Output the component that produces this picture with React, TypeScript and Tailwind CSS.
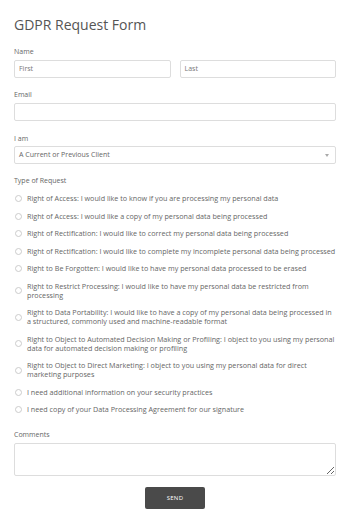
import React from 'react';

const OPTIONS: string[] = [
  'Right of Access: I would like to know if you are processing my personal data',
  'Right of Access: I would like a copy of my personal data being processed',
  'Right of Rectification: I would like to correct my personal data being processed',
  'Right of Rectification: I would like to complete my incomplete personal data being processed',
  'Right to Be Forgotten: I would like to have my personal data processed to be erased',
  'Right to Restrict Processing: I would like to have my personal data be restricted from processing',
  'Right to Data Portability: I would like to have a copy of my personal data being processed in a structured, commonly used and machine-readable format',
  'Right to Object to Automated Decision Making or Profiling: I object to you using my personal data for automated decision making or profiling',
  'Right to Object to Direct Marketing: I object to you using my personal data for direct marketing purposes',
  'I need additional information on your security practices',
  'I need copy of your Data Processing Agreement for our signature',
];

function Label({ children }: { children: React.ReactNode }) {
  return <div className="text-[7px] leading-[10px] text-[#666]">{children}</div>;
}

export default function App() {
  return (
    <div className="min-h-[523px] bg-white px-[14px] pt-[15px] text-[#555] antialiased" style={{ fontFamily: '"Open Sans", sans-serif' }}>
      <h1 className="text-[14px] leading-[19px] text-[#555]">GDPR Request Form</h1>

      <div className="mt-[13px]">
        <Label>Name</Label>
        <div className="mt-[3px] flex gap-[9px]">
          <div className="flex h-[18px] flex-1 items-center rounded-[2px] border border-[#ddd] px-[4px] text-[7px] text-[#777]">First</div>
          <div className="flex h-[18px] flex-1 items-center rounded-[2px] border border-[#ddd] px-[4px] text-[7px] text-[#777]">Last</div>
        </div>
      </div>

      <div className="mt-[12px]">
        <Label>Email</Label>
        <div className="mt-[3px] h-[18px] rounded-[2px] border border-[#ddd]" />
      </div>

      <div className="mt-[13px]">
        <Label>I am</Label>
        <div className="mt-[2px] flex h-[18px] items-center justify-between rounded-[2px] border border-[#ddd] px-[4px] text-[7px] text-[#666]">
          <span>A Current or Previous Client</span>
          <span className="mr-[2px] h-0 w-0 border-x-[2.5px] border-t-[3px] border-x-transparent border-t-[#aaa]" />
        </div>
      </div>

      <div className="mt-[12px]">
        <Label>Type of Request</Label>
        <div className="mt-[8px] flex flex-col gap-[8.5px]">
          {OPTIONS.map((o) => (
            <div key={o} className="flex items-center gap-[5px] pl-[1px]">
              <span className="h-[7px] w-[7px] shrink-0 rounded-full border border-[#ccc]" />
              <span className="text-[7.2px] leading-[9px] text-[#666]">{o}</span>
            </div>
          ))}
        </div>
      </div>

      <div className="mt-[16px]">
        <Label>Comments</Label>
        <textarea className="mt-[3px] block h-[33px] w-full resize-y rounded-[2px] border border-[#ddd] outline-none" />
      </div>

      <div className="mt-[11px] flex justify-center">
        <button className="h-[22px] w-[60px] rounded-[2px] bg-[#4a4a4a] text-[6px] tracking-[0.3px] text-white">SEND</button>
      </div>
    </div>
  );
}
